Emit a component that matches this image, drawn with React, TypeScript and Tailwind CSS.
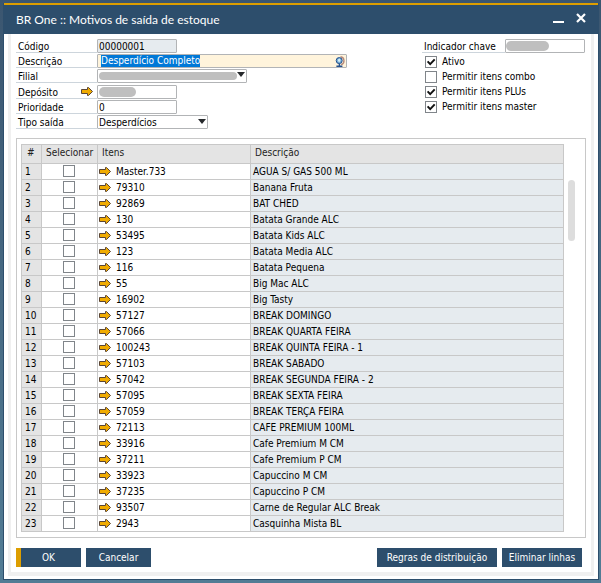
import { useEffect, useRef, type ReactNode } from 'react';

type Item = { code: string; name: string };

const items: Item[] = [
  { code: 'Master.733', name: 'AGUA S/ GAS 500 ML' },
  { code: '79310', name: 'Banana Fruta' },
  { code: '92869', name: 'BAT CHED' },
  { code: '130', name: 'Batata Grande ALC' },
  { code: '53495', name: 'Batata Kids ALC' },
  { code: '123', name: 'Batata Media ALC' },
  { code: '116', name: 'Batata Pequena' },
  { code: '55', name: 'Big Mac ALC' },
  { code: '16902', name: 'Big Tasty' },
  { code: '57127', name: 'BREAK DOMINGO' },
  { code: '57066', name: 'BREAK QUARTA FEIRA' },
  { code: '100243', name: 'BREAK QUINTA FEIRA - 1' },
  { code: '57103', name: 'BREAK SABADO' },
  { code: '57042', name: 'BREAK SEGUNDA FEIRA - 2' },
  { code: '57095', name: 'BREAK SEXTA FEIRA' },
  { code: '57059', name: 'BREAK TERÇA FEIRA' },
  { code: '72113', name: 'CAFE PREMIUM 100ML' },
  { code: '33916', name: 'Cafe Premium M CM' },
  { code: '37211', name: 'Cafe Premium P CM' },
  { code: '33923', name: 'Capuccino M CM' },
  { code: '37235', name: 'Capuccino P CM' },
  { code: '93507', name: 'Carne de Regular ALC Break' },
  { code: '2943', name: 'Casquinha Mista BL' },
];

const field =
  'block h-[14px] rounded-[1px] border border-[#b2b4b6] px-px text-[10px] leading-[12px] text-black outline-none';

function LinkArrow() {
  return (
    <svg viewBox="0 0 12 9" className="block h-[9px] w-3 shrink-0" aria-hidden="true">
      <path
        d="M.5 2.5h6v-2h1l4 4-4 4h-1v-2h-6z"
        fill="#f0ab00"
        stroke="#5a4636"
        strokeWidth="1"
      />
    </svg>
  );
}

function Globe() {
  return (
    <svg viewBox="0 0 10 11" className="h-[11px] w-[10px]" aria-hidden="true">
      <path d="M5.5.8a4 4 0 0 1 .6 7.8" fill="none" stroke="#b58a7c" strokeWidth="1.4" />
      <circle cx="4.2" cy="4.6" r="3" fill="#79b0d8" stroke="#24508c" strokeWidth="1" />
      <path d="M3 3.4l1.6-.8 1 1.4-1 2-1.6-.8z" fill="#d4ecf4" />
      <path d="M4.4 8v1.6M1.4 10.2h6" stroke="#24508c" strokeWidth="1.4" />
    </svg>
  );
}

function Caret() {
  return (
    <svg viewBox="0 0 8 5" className="h-[5px] w-2" aria-hidden="true">
      <path d="M0 0h8L4 5z" fill="#26292c" />
    </svg>
  );
}

function Row({
  id,
  label,
  tall,
  link,
  children,
}: {
  id: string;
  label: string;
  tall?: boolean;
  link?: boolean;
  children: ReactNode;
}) {
  return (
    <div className={tall ? 'flex h-4 items-start' : 'flex h-[15px] items-start'}>
      <div className="flex h-[14px] w-[81px] shrink-0 items-center justify-between border-b border-[#cdd5dc] pr-1">
        <label htmlFor={id} className="pt-[2px] pl-[2px] leading-[12px]">
          {label}
        </label>
        {link && (
          <button type="button" aria-label={'Abrir ' + label}>
            <LinkArrow />
          </button>
        )}
      </div>
      {children}
    </div>
  );
}

function Box({ id, label, checked }: { id: string; label?: string; checked?: boolean }) {
  return (
    <span className="inline-grid size-3 shrink-0">
      <input
        id={id}
        type="checkbox"
        aria-label={label}
        defaultChecked={checked}
        className="peer col-start-1 row-start-1 size-3 appearance-none border border-[#80858a] bg-white"
      />
      <svg
        viewBox="0 0 12 12"
        className="pointer-events-none invisible col-start-1 row-start-1 size-3 peer-checked:visible"
        aria-hidden="true"
      >
        <path d="M2.6 5.4l2.6 2.7L9.7 3.4" fill="none" stroke="#111" strokeWidth="2" />
      </svg>
    </span>
  );
}

function Option({ id, label, checked }: { id: string; label: string; checked?: boolean }) {
  return (
    <div className="flex h-[15px] items-center gap-[5px] pl-[3px]">
      <Box id={id} checked={checked} />
      <label htmlFor={id} className="leading-[12px]">
        {label}
      </label>
    </div>
  );
}

function Action({ children, width, primary }: { children: ReactNode; width: string; primary?: boolean }) {
  return (
    <button
      type="button"
      className={
        'h-[19px] bg-[#2d4e6c] text-center leading-[17px] text-white ' +
        width +
        (primary ? ' border-l-[5px] border-[#dd9e00] pr-[5px]' : '')
      }
    >
      {children}
    </button>
  );
}

export default function App() {
  const description = useRef<HTMLInputElement>(null);

  useEffect(() => {
    description.current?.focus();
    description.current?.select();
  }, []);

  return (
    <div className="min-h-screen bg-linear-to-b from-[#3b5670] to-[#527c95] py-[3px] pr-[2px] pl-[3px] font-['DejaVu_Sans_Condensed','DejaVu_Sans',sans-serif] text-[10px] text-black">
      <div className="border border-t-0 border-[#2d4e6c] bg-white">
        <header className="flex h-[31px] items-center justify-between border-t-2 border-[#dd9e00] bg-[#2d4e6c] pr-3 pl-3">
          <h1 className="font-['Lato','Noto_Sans',sans-serif] text-[12px] leading-4 text-white">
            BR One :: Motivos de saída de estoque
          </h1>
          <div className="flex items-center gap-3 pb-1">
            <button type="button" aria-label="Minimizar">
              <svg viewBox="0 0 11 10" className="h-[10px] w-[11px]">
                <path d="M0 9h11" stroke="#fff" strokeWidth="2" />
              </svg>
            </button>
            <button type="button" aria-label="Fechar">
              <svg viewBox="0 0 10 10" className="size-[10px]">
                <path d="M1 1l8 8M9 1L1 9" stroke="#fff" strokeWidth="2.2" />
              </svg>
            </button>
          </div>
        </header>

        <main className="px-1 pb-[3px]">
          <div className="border-x-[3px] border-b-4 border-[#f0f0f0] p-[5px]">
            <form className="flex justify-between">
              <div>
                <Row id="codigo" label="Código">
                  <input id="codigo" readOnly defaultValue="00000001" className={field + ' w-20 bg-[#e6ebef]'} />
                </Row>
                <Row id="descricao" label="Descrição">
                  <div className="flex h-[14px] w-[250px] items-center rounded-[1px] border border-[#b2b4b6] bg-[#fff4dc] pr-px">
                    <input
                      id="descricao"
                      ref={description}
                      defaultValue="Desperdício Completo"
                      className="h-3 min-w-0 flex-1 bg-transparent pl-[3px] text-[10px] leading-[12px] outline-none selection:bg-[#0078d7] selection:text-white"
                    />
                    <button type="button" aria-label="Traduções">
                      <Globe />
                    </button>
                  </div>
                </Row>
                <Row id="filial" label="Filial" tall>
                  <div className="relative w-[150px]">
                    <select id="filial" className={field + ' w-full appearance-none bg-white'}>
                      <option value=""></option>
                    </select>
                    <div className="pointer-events-none absolute inset-x-[2px] inset-y-[3px] flex items-start">
                      <span className="h-2 flex-1 rounded-full bg-[#bfbfbf]" />
                      <Caret />
                    </div>
                  </div>
                </Row>
                <Row id="deposito" label="Depósito" link>
                  <div className="relative w-20">
                    <input id="deposito" className={field + ' w-full bg-white'} />
                    <span className="pointer-events-none absolute top-[2px] left-[2px] h-[10px] w-[37px] rounded-full bg-[#bfbfbf]" />
                  </div>
                </Row>
                <Row id="prioridade" label="Prioridade">
                  <input id="prioridade" defaultValue="0" className={field + ' w-20 bg-white'} />
                </Row>
                <Row id="tipo" label="Tipo saída" tall>
                  <div className="relative w-[111px]">
                    <select id="tipo" className={field + ' w-full appearance-none bg-white pt-px'}>
                      <option>Desperdícios</option>
                    </select>
                    <span className="pointer-events-none absolute top-1 right-[2px]">
                      <Caret />
                    </span>
                  </div>
                </Row>
              </div>

              <div className="w-[164px]">
                <div className="flex h-[15px] items-start">
                  <label
                    htmlFor="chave"
                    className="h-[14px] w-[83px] shrink-0 border-b border-[#cdd5dc] pt-[2px] pl-[2px] leading-[12px]"
                  >
                    Indicador chave
                  </label>
                  <div className="relative w-20">
                    <input id="chave" className={field + ' w-full bg-white'} />
                    <span className="pointer-events-none absolute top-[2px] left-px h-[10px] w-[43px] rounded-full bg-[#bfbfbf]" />
                  </div>
                </div>
                <Option id="ativo" label="Ativo" checked />
                <Option id="combo" label="Permitir itens combo" />
                <Option id="plus" label="Permitir itens PLUs" checked />
                <Option id="master" label="Permitir itens master" checked />
              </div>
            </form>

            <section className="mt-[7px] flex border border-[#c8c8c8] py-[5px] pr-[10px] pl-1">
              <table className="min-w-0 flex-1 table-fixed border-separate border-spacing-0 border-t border-l border-[#c8c8c8]">
                <colgroup>
                  <col className="w-5" />
                  <col className="w-14" />
                  <col className="w-[153px]" />
                  <col />
                </colgroup>
                <thead>
                  <tr className="h-[19px] bg-[#e4e4e4] text-left leading-[15px] text-[#222]">
                    <th className="border-r border-b border-[#c8c8c8] p-0 pb-[3px] pl-[5px] font-normal">#</th>
                    <th className="border-r border-b border-[#c8c8c8] p-0 pb-[3px] pl-1 font-normal">Selecionar</th>
                    <th className="border-r border-b border-[#c8c8c8] p-0 pb-[3px] pl-1 font-normal">Itens</th>
                    <th className="border-r border-b border-[#c8c8c8] p-0 pb-[3px] pl-1 font-normal">Descrição</th>
                  </tr>
                </thead>
                <tbody>
                  {items.map((item, i) => (
                    <tr key={item.code} className="h-4 leading-[15px]">
                      <td className="border-r border-b border-[#c8c8c8] bg-[#e4e4e4] p-0 pl-[3px]">{i + 1}</td>
                      <td className="border-r border-b border-[#c8c8c8] p-0">
                        <div className="flex h-[15px] items-start justify-center pt-px pr-px">
                          <Box id={'item-' + item.code} label={'Selecionar ' + item.code} />
                        </div>
                      </td>
                      <td className="border-r border-b border-[#c8c8c8] p-0">
                        <div className="flex h-[15px] items-center gap-[5px] pl-px">
                          <button type="button" aria-label={'Abrir ' + item.code}>
                            <LinkArrow />
                          </button>
                          <span>{item.code}</span>
                        </div>
                      </td>
                      <td className="truncate border-r border-b border-[#c8c8c8] bg-[#e6ebef] p-0 pl-[2px]">
                        {item.name}
                      </td>
                    </tr>
                  ))}
                </tbody>
              </table>
              <div className="ml-1 w-[7px] pt-9">
                <div className="h-[61px] rounded-full bg-[#dddddd]" />
              </div>
            </section>

            <footer className="mt-[10px] flex justify-between pr-1">
              <div className="flex gap-[5px]">
                <Action width="w-[65px]" primary>
                  OK
                </Action>
                <Action width="w-[65px]">Cancelar</Action>
              </div>
              <div className="flex gap-[5px]">
                <Action width="w-[120px]">Regras de distribuição</Action>
                <Action width="w-20">Eliminar linhas</Action>
              </div>
            </footer>
          </div>
        </main>
      </div>
    </div>
  );
}
